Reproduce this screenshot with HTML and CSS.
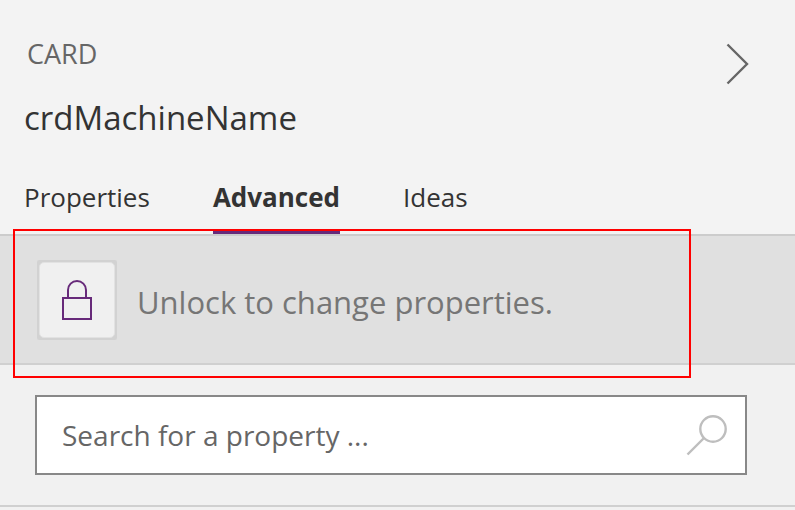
FILE: index.html
```html
<!DOCTYPE html>
<html lang="en">
<head>
<meta charset="utf-8">
<meta name="viewport" content="width=device-width, initial-scale=1">
<title>Card properties</title>
<link rel="stylesheet" href="styles.css">
</head>
<body>
<main class="panel">
  <header class="panel-header">
    <div class="title-row">
      <div class="titles">
        <p class="kind">CARD</p>
        <h1 class="name">crdMachineName</h1>
      </div>
      <button class="collapse" type="button" aria-label="Collapse panel">
        <svg width="24" height="42" viewBox="0 0 24 42" fill="none" stroke="#666" stroke-width="2.4"><path d="M1.5 1.5 21 21 1.5 40.5"/></svg>
      </button>
    </div>
    <nav class="tabs">
      <a class="tab" href="#properties">Properties</a>
      <a class="tab active" href="#advanced" aria-current="page">Advanced</a>
      <a class="tab" href="#ideas">Ideas</a>
    </nav>
  </header>
  <section class="lock-bar">
    <button class="lock" id="lock" type="button" aria-labelledby="lock-text">
      <span class="lock-face">
        <svg width="30" height="40" viewBox="0 0 30 40" fill="none" stroke="#672a7a" stroke-width="2"><path d="M6 18V10a9 9 0 0 1 18 0v8"/><path d="M1 18h28v21H1z"/></svg>
      </span>
    </button>
    <label class="lock-text" id="lock-text" for="lock">Unlock to change properties.</label>
    <div class="highlight"></div>
  </section>
  <form class="search-area">
    <div class="search">
      <input class="search-input" type="text" aria-label="Search for a property" placeholder="Search for a property ...">
      <button class="search-button" type="button" aria-label="Search">
        <svg width="42" height="42" viewBox="0 0 42 42" fill="none" stroke="#bebebe" stroke-width="2.4"><circle cx="28" cy="15" r="12.7"/><path d="M19 24 2.500 40.500"/></svg>
      </button>
    </div>
  </form>
</main>
</body>
</html>
```
FILE: styles.css
```css
* {
  box-sizing: border-box;
}

body {
  margin: 0;
  background: #f1f1f1;
  color: #333;
  font-family: "Open Sans", "Noto Sans", sans-serif;
}

button {
  padding: 0;
  border: 0;
  background: none;
  cursor: pointer;
}

svg {
  display: block;
}

.panel-header {
  padding: 34px 45px 0 24px;
  background: #f3f3f3;
}

.title-row {
  display: flex;
  justify-content: space-between;
  align-items: flex-start;
}

.kind,
.name {
  margin: 0;
  font-weight: 400;
}

.kind {
  padding-left: 3px;
  color: #666;
  font-size: 27px;
  line-height: 40px;
}

.name {
  margin-top: 20px;
  font-size: 33px;
  line-height: 48px;
}

.collapse {
  margin-top: 9px;
}

.tabs {
  display: flex;
  gap: 63px;
  margin-top: 36px;
}

.tab {
  height: 56px;
  color: #333;
  font-size: 26px;
  line-height: 38px;
  text-decoration: none;
}

.active {
  border-bottom: 4px solid #672a7a;
  font-weight: 700;
}

.lock-bar {
  position: relative;
  display: flex;
  align-items: center;
  gap: 20px;
  padding: 24px 37px 23px;
  border-top: 2px solid #ccc;
  border-bottom: 2px solid #d0d0d0;
  background: #e0e0e0;
}

.lock {
  width: 80px;
  height: 80px;
  padding: 2px;
  border-radius: 2px;
  background: #d2d2d2;
}

.lock-face {
  display: grid;
  place-items: center;
  height: 100%;
  border: 1px solid #e2e2e2;
  border-radius: 5px;
  background: #f0f0f0;
}

.lock-text {
  padding-top: 4px;
  color: #767676;
  font-size: 31px;
  line-height: 48px;
}

.highlight {
  position: absolute;
  inset: -7px 104px -15px 13px;
  border: 2px solid #f00;
  pointer-events: none;
}

.search-area {
  padding: 30px 48px 30px 35px;
  border-bottom: 2px solid #d0d0d0;
}

.search {
  display: flex;
  align-items: center;
  height: 80px;
  padding: 0 18px 0 25px;
  border: 2px solid #888;
  background: #fff;
}

.search-input {
  flex: 1;
  min-width: 0;
  padding: 0;
  border: 0;
  outline: 0;
  background: none;
  color: #333;
  font: 28px/40px "Open Sans", "Noto Sans", sans-serif;
}

.search-input::placeholder {
  color: #666;
  opacity: 1;
}
```
